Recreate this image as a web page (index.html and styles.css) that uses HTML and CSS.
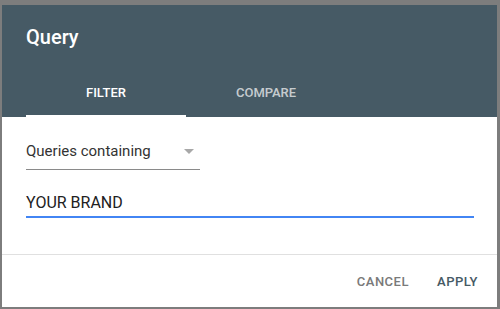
FILE: index.html
```html
<!DOCTYPE html>
<html lang="en">

<head>
    <meta charset="UTF-8">
    <title>Query</title>
    <link rel="stylesheet" href="styles.css">
</head>

<body>

    <div class="dialog">
        <div class="dialog-header">
            <h2 class="dialog-title">Query</h2>
            <div class="tabs">
                <div class="tab active">FILTER</div>
                <div class="tab">COMPARE</div>
            </div>
        </div>

        <div class="dialog-body">
            <div class="select">
                <span class="select-label">Queries containing</span>
                <span class="select-arrow"></span>
            </div>
            <div class="text-field">YOUR BRAND</div>
        </div>

        <div class="dialog-actions">
            <button class="btn cancel">CANCEL</button>
            <button class="btn apply">APPLY</button>
        </div>
    </div>

</body>

</html>
```

FILE: styles.css
```css
body {
    margin: 0;
    padding: 5px 3px 2px 2px;
    background-color: #7d7d7d;
    font-family: Roboto, 'Liberation Sans', sans-serif;
}

.dialog {
    width: 495px;
    height: 302px;
    background-color: #ffffff;
    display: flex;
    flex-direction: column;
}

.dialog-header {
    background-color: #465a65;
    padding: 20px 0 0 24px;
    height: 92px;
    display: flex;
    flex-direction: column;
    gap: 20px;
}

.dialog-title {
    margin: 0;
    font-family: 'Roboto Medium', Roboto, sans-serif;
    font-size: 20px;
    font-weight: 500;
    line-height: 24px;
    color: #ffffff;
}

.tabs {
    display: flex;
}

.tab {
    width: 160px;
    height: 48px;
    line-height: 48px;
    text-align: center;
    font-family: 'Roboto Medium', Roboto, sans-serif;
    font-size: 13px;
    font-weight: 500;
    color: rgba(255, 255, 255, 0.7);
    box-sizing: border-box;
}

.tab.active {
    color: #ffffff;
    border-bottom: 2px solid #ffffff;
}

.dialog-body {
    height: 138px;
    padding: 24px 23px 0 24px;
    box-sizing: border-box;
    border-bottom: 1px solid #e0e0e0;
}

.select {
    width: 174px;
    display: flex;
    align-items: center;
    padding-bottom: 8px;
    border-bottom: 1px solid #8a8a8a;
    font-size: 15px;
    line-height: 20px;
    color: #333333;
}

.select-arrow {
    margin-left: auto;
    margin-right: 6px;
    width: 0;
    height: 0;
    border-left: 5.5px solid transparent;
    border-right: 5.5px solid transparent;
    border-top: 5px solid #a8a8a8;
}

.text-field {
    margin-top: 23px;
    padding-bottom: 3px;
    border-bottom: 2px solid #4285f4;
    font-size: 16px;
    line-height: 20px;
    color: #212121;
}

.dialog-actions {
    display: flex;
    justify-content: flex-end;
    gap: 12px;
    padding: 8px 11px 0 0;
}

.btn {
    background: none;
    border: none;
    padding: 0 8px;
    height: 36px;
    font-family: 'Roboto Medium', Roboto, sans-serif;
    font-size: 13px;
    font-weight: 500;
    letter-spacing: 0.5px;
    cursor: pointer;
}

.cancel {
    color: #7a7a7a;
}

.apply {
    color: #465a65;
}
```
